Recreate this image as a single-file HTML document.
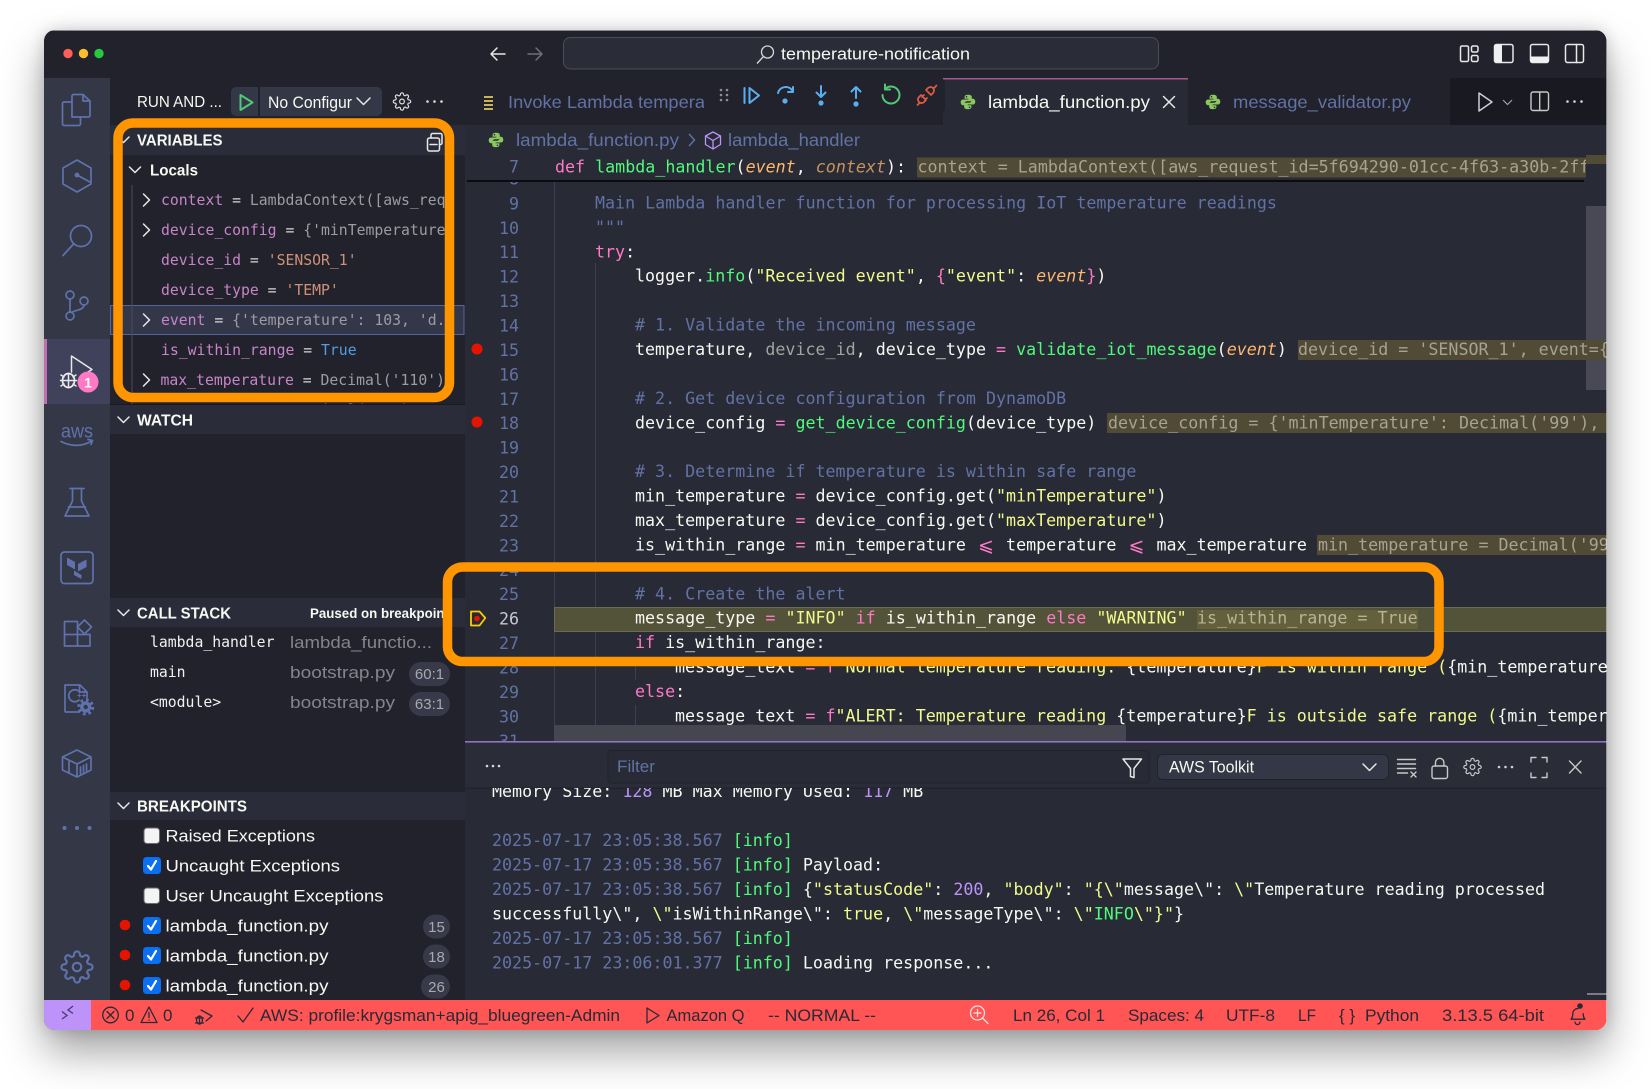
<!DOCTYPE html>
<html><head><meta charset="utf-8"><title>temperature-notification</title>
<style>
html,body{margin:0;padding:0;background:#fff;width:1651px;height:1089px;overflow:hidden}
#sh{position:absolute;left:44px;top:30px;width:1562.5px;height:1000px;border-radius:11px;box-shadow:0 22px 42px rgba(0,0,0,.36),0 0 16px rgba(0,0,0,.16)}
svg{position:absolute;left:0;top:0;filter:blur(.35px)}
text{white-space:pre}
.m{font-family:"DejaVu Sans Mono","Liberation Mono",monospace;font-size:16.66px;fill:#f8f8f2;transform:translateY(.9px)}
.n{font-family:"DejaVu Sans Mono","Liberation Mono",monospace;font-size:16.66px;fill:#6272a4;text-anchor:end;transform:translateY(.9px)}
.v{font-family:"DejaVu Sans Mono","Liberation Mono",monospace;font-size:14.78px;fill:#9c9ca2}
.s{font-family:"Liberation Sans",sans-serif;font-size:17px;fill:#f8f8f2}
.b{font-family:"Liberation Sans",sans-serif;font-size:15.5px;font-weight:bold;fill:#f8f8f2}
.st{font-family:"Liberation Sans",sans-serif;font-size:17px;fill:#282a36}
.c{fill:#6272a4}.k{fill:#ff79c6}.f{fill:#50fa7b}.y{fill:#f1fa8c}.o{fill:#ffb86c;font-style:italic}.od{fill:#c7935e;font-style:italic}.g{fill:#a3a39f}.p{fill:#bd93f9}
.in{fill:#a5a393}
.vk{fill:#c884c8}.vs{fill:#ce9178}.vb{fill:#4f9fe3}.ve{fill:#d8d8d8}
.ic{fill:none;stroke:#5f72ad;stroke-width:1.7;stroke-linecap:round;stroke-linejoin:round}
.w{fill:none;stroke:#e8e8e8;stroke-width:1.5;stroke-linecap:round;stroke-linejoin:round}
.d{fill:none;stroke:#282a36;stroke-width:1.3;stroke-linecap:round;stroke-linejoin:round}
.cb{fill:none;stroke:#5aaef0;stroke-width:2;stroke-linecap:round;stroke-linejoin:round}
</style></head><body>
<div id="sh"></div>
<svg width="1651" height="1089" viewBox="0 0 1651 1089" xmlns="http://www.w3.org/2000/svg">
<defs>
<clipPath id="win"><rect x="44" y="30" width="1562.5" height="1000" rx="11"/></clipPath>
<clipPath id="varclip"><rect x="110" y="155" width="346" height="249"/></clipPath>
<clipPath id="ed"><rect x="465" y="125" width="1142" height="616"/></clipPath>
<clipPath id="pn"><rect x="465" y="788" width="1142" height="212"/></clipPath>
<clipPath id="tab1"><rect x="465" y="78" width="240" height="47"/></clipPath>
<clipPath id="side"><rect x="110" y="598" width="333" height="30"/></clipPath>
<symbol id="gear" viewBox="0 0 24 24"><circle cx="12" cy="12" r="3" fill="none" stroke="currentColor" stroke-width="1.5"/><path fill="none" stroke="currentColor" stroke-width="1.5" d="M19.4 15a1.65 1.65 0 0 0 .33 1.82l.06.06a2 2 0 0 1 0 2.83 2 2 0 0 1-2.83 0l-.06-.06a1.65 1.65 0 0 0-1.82-.33 1.65 1.65 0 0 0-1 1.51V21a2 2 0 0 1-2 2 2 2 0 0 1-2-2v-.09A1.65 1.65 0 0 0 9 19.4a1.65 1.65 0 0 0-1.82.33l-.06.06a2 2 0 0 1-2.83 0 2 2 0 0 1 0-2.83l.06-.06a1.65 1.65 0 0 0 .33-1.82 1.65 1.65 0 0 0-1.51-1H3a2 2 0 0 1-2-2 2 2 0 0 1 2-2h.09A1.65 1.65 0 0 0 4.6 9a1.65 1.65 0 0 0-.33-1.82l-.06-.06a2 2 0 0 1 0-2.83 2 2 0 0 1 2.83 0l.06.06a1.65 1.65 0 0 0 1.82.33H9a1.65 1.65 0 0 0 1-1.51V3a2 2 0 0 1 2-2 2 2 0 0 1 2 2v.09a1.65 1.65 0 0 0 1 1.51 1.65 1.65 0 0 0 1.82-.33l.06-.06a2 2 0 0 1 2.83 0 2 2 0 0 1 0 2.83l-.06.06a1.65 1.65 0 0 0-.33 1.82V9a1.65 1.65 0 0 0 1.51 1H21a2 2 0 0 1 2 2 2 2 0 0 1-2 2h-.09a1.65 1.65 0 0 0-1.51 1z"/></symbol>
<symbol id="py" viewBox="0 0 16 16"><path fill="#8cc860" d="M8 .8C5.600.8 4.600 1.600 4.600 3v1.700h3.800v.8H3.200C1.700 5.500.7 6.600.7 8.300s1 3 2.500 3h1.500V9.500c0-1.300 1-2.300 2.300-2.300h3c1 0 1.800-.8 1.800-1.900V3C11.800 1.700 10.600.8 8 .8z"/><path fill="#8cc860" d="M8 15.200c2.400 0 3.400-.8 3.400-2.200v-1.700H7.600v-.8h5.200c1.500 0 2.500-1.100 2.500-2.800s-1-3-2.500-3h-1.500v1.800c0 1.300-1 2.300-2.300 2.300h-3c-1 0-1.800.8-1.800 1.900V13c0 1.300 1.200 2.200 3.800 2.200z"/><circle cx="6.500" cy="2.700" r=".8" fill="#2a2c3a"/><circle cx="9.500" cy="13.300" r=".8" fill="#2a2c3a"/></symbol>
</defs>
<g clip-path="url(#win)">
<rect x="44" y="30" width="1563" height="1000" fill="#21222c"/>
<rect x="44" y="30" width="1563" height="1" fill="#8a8a8e"/>

<!-- title bar -->
<circle cx="68" cy="53.500" r="4.700" fill="#ff5f57"/><circle cx="83.500" cy="53.500" r="4.700" fill="#febc2e"/><circle cx="99" cy="53.500" r="4.700" fill="#28c840"/>
<path class="w" d="M505 54H491M497 48l-6 6 6 6"/>
<path fill="none" stroke="#6d7080" stroke-width="1.500" stroke-linecap="round" stroke-linejoin="round" d="M528 54H542M536 48l6 6-6 6"/>
<rect x="563.500" y="37.500" width="595" height="31.500" rx="7" fill="#2a2c38" stroke="#4a4c5a"/>
<circle cx="767.500" cy="52" r="6" fill="none" stroke="#d8d8d8" stroke-width="1.300"/><path d="M763 57l-6 6.500" stroke="#d8d8d8" stroke-width="1.300" fill="none"/>
<text class="s" x="781" y="59.500" textLength="189" lengthAdjust="spacingAndGlyphs">temperature-notification</text>
<g class="w"><rect x="1460.500" y="46" width="8" height="15.500" rx="1.500"/><rect x="1471.500" y="46" width="6.500" height="6" rx="1.500"/><rect x="1471.500" y="55.500" width="6.500" height="6" rx="1.500"/>
<rect x="1494.500" y="44.500" width="18.500" height="18" rx="2"/><rect x="1530.500" y="44.500" width="18" height="18" rx="2"/><rect x="1565.500" y="44.500" width="18" height="18" rx="2"/><path d="M1576.500 44.500v18"/></g>
<path d="M1496.500 44.500h5.500v18h-5.500a2 2 0 0 1-2-2v-14a2 2 0 0 1 2-2z" fill="#f0f0f0"/>
<path d="M1530.500 56.500h18v4a2 2 0 0 1-2 2h-14a2 2 0 0 1-2-2z" fill="#f0f0f0"/>

<!-- activity bar -->
<rect x="44" y="78" width="66" height="922" fill="#343746"/>
<rect x="44" y="339" width="66" height="65" fill="#3f425a"/><rect x="44" y="339" width="3" height="65" fill="#c06fb0"/>
<g class="ic">
<path d="M72 117V96a1.500 1.500 0 0 1 1.500-1.500H83L90 101V115.500a1.500 1.500 0 0 1-1.500 1.500ZM83 94.500V101H90"/>
<path d="M72 102H64a1.500 1.500 0 0 0-1.500 1.500V124a1.500 1.500 0 0 0 1.500 1.500H79a1.500 1.500 0 0 0 1.500-1.500V117"/>
<path d="M77 160l14 8v16l-14 8-14-8v-16zM77 175l13 7"/>
<circle cx="81" cy="236" r="10.500"/><path d="M73.500 244L63 255.500"/>
<circle cx="70" cy="295" r="4"/><circle cx="70" cy="316" r="4"/><circle cx="84" cy="301" r="4"/><path d="M70 299v13M84 305c0 5-9 5-13 7.500"/>
<path d="M65 516l7.500-15V488.500h9V501l7.500 15zM70 488.500h14M68.500 507h17"/>
<rect x="61" y="552" width="32" height="31.500" rx="3.500"/>
<path d="M64.500 634.500h13v-13h-13zM64.500 634.500v11.500h13v-11.500M77.500 634.500H90v11.500H77.500"/><path d="M84.500 620l7 7-7 7-7-7z"/>
<path d="M79 712H66a1 1 0 0 1-1-1V685h15l7 7v6M79.500 685v7h7.500"/><path d="M79 691.500a6 6 0 1 0 0 8.500"/>
<path d="M62.500 757L77 750L91 757V770L77 777L62.500 770ZM62.500 757L77 764L91 757M77 764V777M69 761.500v11.500M80.500 767v6.500M83.500 765.500v6.500M86.500 764v6.500"/>
</g>
<circle cx="77" cy="175" r="2.400" fill="#5f72ad"/>
<circle cx="85.700" cy="707" r="7" fill="none" stroke="#5f72ad" stroke-width="3" stroke-dasharray="2.700 2.800"/>
<circle cx="85.700" cy="707" r="5.600" fill="#5f72ad"/><circle cx="85.700" cy="707" r="2.200" fill="#343746"/>
<text x="77" y="698" font-family="Liberation Sans,sans-serif" font-size="8" font-weight="bold" fill="#5f72ad">++</text>
<path fill="#5f72ad" d="M67 557.500L75 562V569.500L67 565ZM86.500 559.500L78 564V571.500L86.500 567ZM74 570.500L81.500 575V579L74 575Z"/>
<text x="61" y="437.500" font-family="Liberation Sans,sans-serif" font-size="19" fill="#5f72ad" textLength="32" lengthAdjust="spacingAndGlyphs">aws</text>
<path class="ic" d="M61 441.500q16 8 31-.5M88 439.500l4.500 1-1.500 4"/>
<g fill="#5f72ad"><circle cx="64.500" cy="828" r="2"/><circle cx="77" cy="828" r="2"/><circle cx="89.500" cy="828" r="2"/></g>
<use href="#gear" x="60" y="950" width="34" height="34" color="#5f72ad"/>
<!-- debug icon -->
<path class="w" stroke-width="1.800" d="M71.500 372v-16l20.500 13.500-7 4.500"/>
<ellipse cx="68.500" cy="380.500" rx="6" ry="7" fill="#3f425a" stroke="#f0f0f0" stroke-width="1.700"/><path class="w" d="M62.500 380.500h12M61 375l3 2M76 375l-3 2M60.500 380.500h3M73.500 380.500h3M61 386l3-2M76 386l-3-2M68.500 374v13"/>
<circle cx="88" cy="382" r="10.500" fill="#ff79c6"/><text x="88" y="387.500" font-family="Liberation Sans,sans-serif" font-size="14" font-weight="bold" fill="#f8f8f2" text-anchor="middle">1</text>

<!-- sidebar -->
<rect x="110" y="78" width="355" height="922" fill="#21222c"/>
<text class="s" x="137" y="107" textLength="85" lengthAdjust="spacingAndGlyphs" style="font-size:16px">RUN AND ...</text>
<rect x="231" y="87" width="151" height="29" rx="5" fill="#343746"/><rect x="258" y="87" width="2" height="29" fill="#21222c"/>
<path d="M240.500 95v15l12-7.500z" fill="none" stroke="#50c878" stroke-width="2" stroke-linejoin="round"/>
<text class="s" x="268" y="108" textLength="84" lengthAdjust="spacingAndGlyphs">No Configur</text>
<path class="w" d="M357 98l6.500 6.500 6.500-6.500"/>
<use href="#gear" x="392.500" y="92" width="19" height="19" color="#e0e0e0"/>
<g fill="#e0e0e0"><circle cx="427.500" cy="101.500" r="1.300"/><circle cx="434.500" cy="101.500" r="1.300"/><circle cx="441.500" cy="101.500" r="1.300"/></g>

<rect x="110" y="125" width="355" height="30" fill="#2a2c3a"/>
<rect x="110" y="405" width="355" height="29" fill="#2a2c3a"/>
<rect x="110" y="598" width="355" height="29" fill="#2a2c3a"/>
<rect x="110" y="792" width="355" height="28" fill="#2a2c3a"/>
<rect x="110" y="404" width="355" height="1" fill="#191a21"/>
<path class="w" stroke-width="1.300" d="M118 137l5.500 5.500 5.500-5.500M118 417l5.500 5.500 5.500-5.500M118 610l5.500 5.500 5.500-5.500M118 803l5.500 5.500 5.500-5.500M129.500 167l5.500 5.500 5.500-5.500"/>
<text class="b" x="137" y="145.500" textLength="85.500" lengthAdjust="spacingAndGlyphs">VARIABLES</text>
<g class="w" stroke-width="1.300"><rect x="427.500" y="138" width="12" height="13" rx="2"/><path d="M431 138v-3a1.500 1.500 0 0 1 1.500-1.500h8a1.500 1.500 0 0 1 1.500 1.500v8a1.500 1.500 0 0 1-1.500 1.500h-1M430 144.500h7"/></g>
<text class="b" x="150" y="175.500" textLength="48" lengthAdjust="spacingAndGlyphs">Locals</text>

<rect x="110.500" y="305.500" width="353.500" height="29" fill="#34374a" stroke="#55659a"/>
<rect x="131.500" y="185" width="1" height="219" fill="#4a4c58"/>
<path class="w" stroke="#d0d0d0" stroke-width="1.300" d="M143.500 194l6 6-6 6M143.500 224l6 6-6 6M143.500 314l6 6-6 6M143.500 374l6 6-6 6"/>
<g clip-path="url(#varclip)" class="v">
<text class="v" x="161" y="205"><tspan class="vk">context</tspan><tspan class="ve"> = </tspan>LambdaContext([aws_req.</text>
<text class="v" x="161" y="235"><tspan class="vk">device_config</tspan><tspan class="ve"> = </tspan>{'minTemperature'.</text>
<text class="v" x="161" y="265"><tspan class="vk">device_id</tspan><tspan class="ve"> = </tspan><tspan class="vs">'SENSOR_1'</tspan></text>
<text class="v" x="161" y="295"><tspan class="vk">device_type</tspan><tspan class="ve"> = </tspan><tspan class="vs">'TEMP'</tspan></text>
<text class="v" x="161" y="325"><tspan class="vk">event</tspan><tspan class="ve"> = </tspan>{'temperature': 103, 'd..</text>
<text class="v" x="161" y="355"><tspan class="vk">is_within_range</tspan><tspan class="ve"> = </tspan><tspan class="vb">True</tspan></text>
<text class="v" x="160.500" y="385"><tspan class="vk">max_temperature</tspan><tspan class="ve"> = </tspan>Decimal('110')</text>
<text class="v" x="161" y="415"><tspan class="vk">message_type</tspan><tspan class="ve"> = </tspan>Decimal('99')</text>
</g>
<text class="b" x="137" y="425.500" textLength="56" lengthAdjust="spacingAndGlyphs">WATCH</text>
<text class="b" x="137" y="618.500" textLength="94" lengthAdjust="spacingAndGlyphs">CALL STACK</text>
<g clip-path="url(#side)"><text class="b" x="310" y="618" textLength="139" lengthAdjust="spacingAndGlyphs" style="font-size:13.5px">Paused on breakpoint</text></g>
<text class="v" x="150" y="647" style="fill:#f0f0f0">lambda_handler</text>
<text class="v" x="150" y="677" style="fill:#f0f0f0">main</text>
<text class="v" x="150" y="707" style="fill:#f0f0f0">&lt;module&gt;</text>
<g class="s"><text class="s" x="290" y="648" textLength="142" lengthAdjust="spacingAndGlyphs" style="fill:#84858c">lambda_functio...</text>
<text class="s" x="290" y="678" textLength="105" lengthAdjust="spacingAndGlyphs" style="fill:#84858c">bootstrap.py</text>
<text class="s" x="290" y="708" textLength="105" lengthAdjust="spacingAndGlyphs" style="fill:#84858c">bootstrap.py</text></g>
<rect x="409" y="662" width="41" height="24" rx="12" fill="#383a49"/><rect x="409" y="692" width="41" height="24" rx="12" fill="#383a49"/>
<text class="s" x="429.500" y="679" text-anchor="middle" style="fill:#a8a8ae;font-size:15px">60:1</text>
<text class="s" x="429.500" y="709" text-anchor="middle" style="fill:#a8a8ae;font-size:15px">63:1</text>

<text class="b" x="137" y="811.500" textLength="110" lengthAdjust="spacingAndGlyphs">BREAKPOINTS</text>
<rect x="144" y="828" width="15.500" height="15.500" rx="3" fill="#f4f4f4" stroke="#6a6a70"/>
<rect x="144" y="888" width="15.500" height="15.500" rx="3" fill="#f4f4f4" stroke="#6a6a70"/>
<g fill="#0a6ff0"><rect x="143" y="857" width="18" height="17" rx="3.500"/><rect x="143" y="917" width="18" height="17" rx="3.500"/><rect x="143" y="947" width="18" height="17" rx="3.500"/><rect x="143" y="977" width="18" height="17" rx="3.500"/></g>
<g fill="none" stroke="#fff" stroke-width="2.200" stroke-linecap="round" stroke-linejoin="round"><path d="M148 866l3 3.500 5-8.500M148 926l3 3.500 5-8.500M148 956l3 3.500 5-8.500M148 986l3 3.500 5-8.500"/></g>
<g fill="#e51400"><circle cx="125" cy="925" r="5.300"/><circle cx="125" cy="955" r="5.300"/><circle cx="125" cy="985" r="5.300"/></g>
<text class="s" x="165.500" y="841.500" textLength="149.500" lengthAdjust="spacingAndGlyphs">Raised Exceptions</text>
<text class="s" x="165.500" y="871.500" textLength="174.500" lengthAdjust="spacingAndGlyphs">Uncaught Exceptions</text>
<text class="s" x="165.500" y="901.500" textLength="218" lengthAdjust="spacingAndGlyphs">User Uncaught Exceptions</text>
<text class="s" x="165.500" y="931.500" textLength="163" lengthAdjust="spacingAndGlyphs">lambda_function.py</text>
<text class="s" x="165.500" y="961.500" textLength="163" lengthAdjust="spacingAndGlyphs">lambda_function.py</text>
<text class="s" x="165.500" y="991.500" textLength="163" lengthAdjust="spacingAndGlyphs">lambda_function.py</text>
<g fill="#383a49"><rect x="423" y="914.500" width="27" height="24" rx="12"/><rect x="423" y="944.500" width="27" height="24" rx="12"/><rect x="421" y="974.500" width="29" height="24" rx="12"/></g>
<g class="s"><text class="s" x="436.500" y="932" text-anchor="middle" style="fill:#a8a8ae;font-size:15px">15</text><text class="s" x="436.500" y="962" text-anchor="middle" style="fill:#a8a8ae;font-size:15px">18</text><text class="s" x="436.500" y="992" text-anchor="middle" style="fill:#a8a8ae;font-size:15px">26</text></g>

<!-- editor -->
<rect x="465" y="125" width="1142" height="616" fill="#282a36"/>
<!-- tabs -->
<rect x="465" y="78" width="478" height="47" fill="#21222c"/>
<rect x="1188" y="78" width="262" height="47" fill="#21222c"/>
<rect x="1450" y="78" width="157" height="47" fill="#191a21"/>
<rect x="943" y="78" width="245" height="47" fill="#282a36"/><rect x="943" y="78" width="245" height="1.500" fill="#a8578f"/>
<g fill="#c9b458"><rect x="484" y="96" width="9" height="2"/><rect x="484" y="100" width="9" height="2"/><rect x="484" y="104" width="9" height="2"/><rect x="484" y="108" width="9" height="2"/></g>
<g clip-path="url(#tab1)"><text class="s" x="508" y="108" textLength="197" lengthAdjust="spacingAndGlyphs" style="fill:#6272a4;font-size:17.5px">Invoke Lambda tempera</text></g>
<use href="#py" x="960" y="94" width="16" height="16"/>
<text class="s" x="988" y="108" textLength="162" lengthAdjust="spacingAndGlyphs" style="font-size:17.5px">lambda_function.py</text>
<path class="w" d="M1163.500 96.500l11 11M1174.500 96.500l-11 11"/>
<use href="#py" x="1205" y="94" width="16" height="16"/>
<text class="s" x="1233" y="108" textLength="178" lengthAdjust="spacingAndGlyphs" style="fill:#6272a4;font-size:17.5px">message_validator.py</text>
<path fill="none" stroke="#d0d0d0" stroke-width="1.500" stroke-linejoin="round" d="M1479 93v18l13-9z"/>
<path fill="none" stroke="#a0a0a0" stroke-width="1.200" d="M1503 100l4.500 4.500 4.500-4.500"/>
<rect x="1531" y="92" width="17.500" height="18.500" rx="2" fill="none" stroke="#c8c8c8" stroke-width="1.400"/><path stroke="#c8c8c8" stroke-width="1.400" d="M1539.700 92v18"/>
<g fill="#d8d8d8"><circle cx="1567.500" cy="101.500" r="1.300"/><circle cx="1574.500" cy="101.500" r="1.300"/><circle cx="1581.500" cy="101.500" r="1.300"/></g>
<!-- breadcrumbs -->
<use href="#py" x="488" y="132" width="16" height="16"/>
<text class="s" x="516" y="146" textLength="163" lengthAdjust="spacingAndGlyphs" style="fill:#6272a4;font-size:17.5px">lambda_function.py</text>
<path fill="none" stroke="#6272a4" stroke-width="1.400" d="M689 134l5.500 6-5.500 6"/>
<path fill="none" stroke="#bd93f9" stroke-width="1.300" stroke-linejoin="round" d="M713 132l7.500 4v8.500l-7.500 4.500-7.500-4.500V136zM705.500 136l7.500 4.500 7.500-4.500M713 140.500V149"/>
<text class="s" x="728" y="146" textLength="132" lengthAdjust="spacingAndGlyphs" style="fill:#6272a4;font-size:17.5px">lambda_handler</text>

<g clip-path="url(#ed)">
<!-- scrollbars (under text) -->
<rect x="1586" y="206" width="21" height="184" fill="#484954"/>
<!-- guides -->
<path stroke="#3d4054" stroke-width="1" d="M554.500 181V741M595.500 263V741M635.500 658V680M635.500 705V728"/>
<!-- current line -->
<rect x="554.500" y="607.500" width="1053" height="24" fill="#525339" stroke="#6a6c52"/>
<rect x="1197" y="610" width="221" height="19" fill="#65603c"/>
<!-- inline value backgrounds -->
<rect x="1298" y="340" width="309" height="20" fill="#514a35"/>
<rect x="1107" y="413" width="500" height="20" fill="#514a35"/>
<rect x="1317" y="535" width="290" height="20" fill="#514a35"/>
<g class="n">
<text class="n" x="519" y="182.500">8</text>
<text class="n" x="519" y="207.500">9</text><text class="n" x="519" y="232">10</text><text class="n" x="519" y="256.400">11</text><text class="n" x="519" y="280.800">12</text><text class="n" x="519" y="305.200">13</text><text class="n" x="519" y="329.700">14</text><text class="n" x="519" y="354.100">15</text><text class="n" x="519" y="378.500">16</text><text class="n" x="519" y="403">17</text><text class="n" x="519" y="427.400">18</text><text class="n" x="519" y="451.800">19</text><text class="n" x="519" y="476.200">20</text><text class="n" x="519" y="500.700">21</text><text class="n" x="519" y="525.100">22</text><text class="n" x="519" y="549.500">23</text><text class="n" x="519" y="574">24</text><text class="n" x="519" y="598.400">25</text><text class="n" x="519" y="622.800" style="fill:#c6c8d4">26</text><text class="n" x="519" y="647.200">27</text><text class="n" x="519" y="671.700">28</text><text class="n" x="519" y="696.100">29</text><text class="n" x="519" y="720.500">30</text><text class="n" x="519" y="745">31</text>
</g>
<text class="m" x="595" y="207.500"><tspan class="c">Main Lambda handler function for processing IoT temperature readings</tspan></text>
<text class="m" x="595" y="232"><tspan class="c">"""</tspan></text>
<text class="m" x="595" y="256.400"><tspan class="k">try</tspan>:</text>
<text class="m" x="635" y="280.800">logger.<tspan class="f">info</tspan>(<tspan class="y">"Received event"</tspan>, <tspan class="k">{</tspan><tspan class="y">"event"</tspan>: <tspan class="o">event</tspan><tspan class="k">}</tspan>)</text>
<text class="m" x="635" y="329.700"><tspan class="c"># 1. Validate the incoming message</tspan></text>
<text class="m" x="635" y="354.100">temperature, <tspan class="g">device_id</tspan>, device_type <tspan class="k">=</tspan> <tspan class="f">validate_iot_message</tspan>(<tspan class="o">event</tspan>)</text>
<text class="m in" x="1298" y="354.100">device_id = 'SENSOR_1', event={'temperature': 103}</text>
<text class="m" x="635" y="403"><tspan class="c"># 2. Get device configuration from DynamoDB</tspan></text>
<text class="m" x="635" y="427.400">device_config <tspan class="k">=</tspan> <tspan class="f">get_device_config</tspan>(device_type)</text>
<text class="m in" x="1108" y="427.400">device_config = {'minTemperature': Decimal('99'), 'max</text>
<text class="m" x="635" y="476.200"><tspan class="c"># 3. Determine if temperature is within safe range</tspan></text>
<text class="m" x="635" y="500.700">min_temperature <tspan class="k">=</tspan> device_config.get(<tspan class="y">"minTemperature"</tspan>)</text>
<text class="m" x="635" y="525.100">max_temperature <tspan class="k">=</tspan> device_config.get(<tspan class="y">"maxTemperature"</tspan>)</text>
<text class="m" x="635" y="549.500">is_within_range <tspan class="k">=</tspan> min_temperature    temperature    max_temperature</text>
<text x="986" y="551.400" text-anchor="middle" font-family="DejaVu Sans,sans-serif" font-size="19" fill="#ff79c6">⩽</text>
<text x="1136.500" y="551.400" text-anchor="middle" font-family="DejaVu Sans,sans-serif" font-size="19" fill="#ff79c6">⩽</text>
<text class="m in" x="1318" y="549.500">min_temperature = Decimal('99')</text>
<text class="m" x="635" y="598.400"><tspan class="c"># 4. Create the alert</tspan></text>
<text class="m" x="635" y="622.800">message_type <tspan class="k">=</tspan> <tspan class="y">"INFO"</tspan> <tspan class="k">if</tspan> is_within_range <tspan class="k">else</tspan> <tspan class="y">"WARNING"</tspan></text>
<text class="m" x="1197" y="622.800" style="fill:#b6b498">is_within_range = True</text>
<text class="m" x="635" y="647.200"><tspan class="k">if</tspan> is_within_range:</text>
<text class="m" x="675" y="671.700">message_text <tspan class="k">=</tspan> <tspan class="k">f</tspan><tspan class="y">"Normal temperature reading: </tspan>{temperature}<tspan class="y">F is within range (</tspan>{min_temperature</text>
<text class="m" x="635" y="696.100"><tspan class="k">else</tspan>:</text>
<text class="m" x="675" y="720.500">message_text <tspan class="k">=</tspan> <tspan class="k">f</tspan><tspan class="y">"ALERT: Temperature reading </tspan>{temperature}<tspan class="y">F is outside safe range (</tspan>{min_temper</text>
<!-- gutter breakpoints -->
<circle cx="477" cy="349" r="5.500" fill="#e51400"/><circle cx="477" cy="422" r="5.500" fill="#e51400"/>
<path d="M471 611.500h8.500l5.800 6.500-5.800 7.500H471z" fill="none" stroke="#ffcc00" stroke-width="1.800" stroke-linejoin="round"/><circle cx="477" cy="618.500" r="2.800" fill="#e51400"/>
<rect x="554" y="725" width="572" height="16" fill="#45464f"/>
<!-- sticky -->
<rect x="465" y="155" width="1142" height="25" fill="#282a36"/>
<rect x="467" y="180" width="1117" height="2" fill="#0b0b10"/>
<text class="n" x="519" y="171.500">7</text>
<rect x="917" y="157.500" width="669" height="20" fill="#514a35"/>
<rect x="1586" y="155" width="21" height="9" fill="#514a35"/>
<text class="m" x="555" y="171.500"><tspan class="k">def</tspan> <tspan class="f">lambda_handler</tspan>(<tspan class="o">event</tspan>, <tspan class="od">context</tspan>):</text>
<clipPath id="stk"><rect x="917" y="150" width="669" height="30"/></clipPath>
<g clip-path="url(#stk)"><text class="m in" x="917.500" y="171.500">context = LambdaContext([aws_request_id=5f694290-01cc-4f63-a30b-2ff</text></g>
</g>

<!-- debug toolbar -->
<rect x="704" y="78" width="241" height="35" rx="5" fill="#21222c"/>
<g fill="#8a8c98"><circle cx="721" cy="90" r="1.300"/><circle cx="727" cy="90" r="1.300"/><circle cx="721" cy="95" r="1.300"/><circle cx="727" cy="95" r="1.300"/><circle cx="721" cy="100" r="1.300"/><circle cx="727" cy="100" r="1.300"/></g>
<g class="cb">
<path d="M744.500 88v15M749.500 88v15l9.500-7.500z"/>
<path d="M778 93a8 8 0 0 1 14-3M793 87v5h-5"/>
<path d="M821 86v11M816.500 92.500l4.500 4.500 4.500-4.500"/>
<path d="M856 98V87M851.500 91.500l4.500-4.500 4.500 4.500"/>
</g>
<g fill="#5aaef0"><circle cx="785" cy="101" r="2.600"/><circle cx="821" cy="103" r="2.600"/><circle cx="856" cy="104" r="2.600"/></g>
<path d="M885 89a8.500 8.500 0 1 1-2.500 6M885 84.500v5h5" fill="none" stroke="#50c878" stroke-width="2" stroke-linecap="round" stroke-linejoin="round"/>
<path d="M920 102.500l-2.500 2.500M934 88l2.500-2.500M921 95l-2 2a3.500 3.500 0 0 0 5 5l2-2zM928 88l-2 2 5 5 2-2a3.500 3.500 0 0 0-5-5zM922 97l2-2M925 100l2-2" fill="none" stroke="#df5d44" stroke-width="1.700" stroke-linecap="round" stroke-linejoin="round"/>

<!-- panel -->
<rect x="465" y="741" width="1142" height="259" fill="#282a36"/>
<rect x="465" y="741" width="1142" height="1.600" fill="#8f73c4"/>
<rect x="465" y="743" width="1142" height="44.500" fill="#2a2c38"/>
<rect x="465" y="787.500" width="1142" height="1.500" fill="#21222c"/>
<g fill="#d8d8d8"><circle cx="487" cy="766" r="1.300"/><circle cx="493" cy="766" r="1.300"/><circle cx="499" cy="766" r="1.300"/></g>
<rect x="608" y="750.500" width="541" height="32.500" rx="3" fill="#282a36" stroke="#21222c"/>
<text class="s" x="617" y="772" textLength="38" lengthAdjust="spacingAndGlyphs" style="fill:#6272a4;font-size:16.500px">Filter</text>
<path class="w" stroke="#c8c8c8" stroke-width="1.300" d="M1123 759h18.500l-7.500 9.500v9l-3.500-1v-8z"/>
<rect x="1157.500" y="754.500" width="231" height="25" rx="5" fill="#343746" stroke="#21222c"/>
<text class="s" x="1169" y="772.500" textLength="85" lengthAdjust="spacingAndGlyphs">AWS Toolkit</text>
<path class="w" d="M1363 764l6.500 6.500 6.500-6.500"/>
<g fill="none" stroke="#c8c8c8" stroke-width="1.400" stroke-linecap="round" stroke-linejoin="round">
<path d="M1397.500 759.500h18M1397.500 764h18M1397.500 768.500h18M1397.500 773h10M1411 772l5 5M1416 772l-5 5"/>
<rect x="1432" y="766" width="15.500" height="12.500" rx="2"/><path d="M1435.500 766v-3.500a4.200 4.200 0 0 1 8.400 0V766"/>
<path d="M1531 762v-4.500h5M1542 757.500h5v4.500M1531 773v4.500h5M1542 777.500h5V773"/>
<path d="M1569.500 761l11.500 12M1581 761l-11.500 12"/>
</g>
<use href="#gear" x="1463" y="757.500" width="19" height="19" color="#c8c8c8"/>
<g fill="#d0d0d0"><circle cx="1499" cy="767" r="1.300"/><circle cx="1505.500" cy="767" r="1.300"/><circle cx="1512" cy="767" r="1.300"/></g>
<g clip-path="url(#pn)">
<text class="m" x="492" y="796">Memory Size: <tspan class="p">128</tspan> MB Max Memory Used: <tspan class="p">117</tspan> MB</text>
<text class="m" x="492" y="845"><tspan class="c">2025-07-17 23:05:38.567</tspan> <tspan class="f">[info]</tspan></text>
<text class="m" x="492" y="869.500"><tspan class="c">2025-07-17 23:05:38.567</tspan> <tspan class="f">[info]</tspan> Payload:</text>
<text class="m" x="492" y="894"><tspan class="c">2025-07-17 23:05:38.567</tspan> <tspan class="f">[info]</tspan> {<tspan class="y">"statusCode"</tspan>: <tspan class="p">200</tspan>, <tspan class="y">"body"</tspan>: <tspan class="y">"{\"</tspan>message\": <tspan class="y">\"</tspan>Temperature reading processed</text>
<text class="m" x="492" y="918.500">successfully\", <tspan class="y">\"</tspan>isWithinRange\": <tspan class="y">true</tspan>, <tspan class="y">\"</tspan>messageType\": <tspan class="y">\"</tspan><tspan class="f">INFO</tspan><tspan class="y">\"}"</tspan>}</text>
<text class="m" x="492" y="943"><tspan class="c">2025-07-17 23:05:38.567</tspan> <tspan class="f">[info]</tspan></text>
<text class="m" x="492" y="967.500"><tspan class="c">2025-07-17 23:06:01.377</tspan> <tspan class="f">[info]</tspan> Loading response...</text>
</g>
<rect x="1587" y="993" width="20" height="2" fill="#7a7b85"/>

<!-- status bar -->
<rect x="44" y="1000" width="1563" height="30" fill="#ff5555"/>
<rect x="44" y="1000" width="47" height="30" fill="#bd93f9"/>
<path d="M62 1019l5-3.500-5-4M73 1006l-5 4 5 3.500" fill="none" stroke="#4a3a70" stroke-width="1.300"/>
<g class="d">
<circle cx="110.500" cy="1015" r="7.800"/><path d="M107 1011.500l7 7M114 1011.500l-7 7"/>
<path d="M149 1007l8 15.500h-16zM149 1012.500v5M149 1020v.2"/>
<path d="M201 1010l11 6-6 5"/><ellipse cx="199.500" cy="1020" rx="3" ry="4"/><path d="M195.500 1018h8M195.500 1023h8M199.500 1016v8"/>
<path d="M238 1016l5 6 10-14"/>
<path d="M647 1008v15l12-7.500z"/>
<path d="M1578 1008.500a5.200 5.200 0 0 0-5.200 5.200c0 4-1.800 5.500-1.800 5.500h14s-1.800-1.500-1.800-5.500M1575 1022a2.500 2.500 0 0 0 5 0"/>
</g>
<g fill="none" stroke="#f8e0e0" stroke-width="1.300" stroke-linecap="round"><circle cx="977.500" cy="1013" r="7"/><path d="M982.500 1018l5.500 5.500M977.500 1009.500v7M974 1013h7"/></g>
<circle cx="1580" cy="1006" r="2.800" fill="#282a36"/>
<text class="st" x="125" y="1021">0</text><text class="st" x="163" y="1021">0</text>
<text class="st" x="260" y="1021" textLength="360" lengthAdjust="spacingAndGlyphs">AWS: profile:krygsman+apig_bluegreen-Admin</text>
<text class="st" x="666.500" y="1021" textLength="78" lengthAdjust="spacingAndGlyphs">Amazon Q</text>
<text class="st" x="768" y="1021" textLength="108" lengthAdjust="spacingAndGlyphs">-- NORMAL --</text>
<text class="st" x="1013" y="1021" textLength="92" lengthAdjust="spacingAndGlyphs">Ln 26, Col 1</text>
<text class="st" x="1128" y="1021" textLength="76" lengthAdjust="spacingAndGlyphs">Spaces: 4</text>
<text class="st" x="1226" y="1021" textLength="49" lengthAdjust="spacingAndGlyphs">UTF-8</text>
<text class="st" x="1298" y="1021" textLength="18" lengthAdjust="spacingAndGlyphs">LF</text>
<text class="st" x="1339" y="1021" textLength="16" lengthAdjust="spacing">{}</text>
<text class="st" x="1365" y="1021" textLength="54" lengthAdjust="spacingAndGlyphs">Python</text>
<text class="st" x="1442" y="1021" textLength="102" lengthAdjust="spacingAndGlyphs">3.13.5 64-bit</text>

<!-- orange annotations -->
<rect x="118" y="123" width="331.500" height="274.500" rx="15" fill="none" stroke="#ff9500" stroke-width="9.500"/>
<rect x="447.500" y="567" width="991.500" height="94.500" rx="15" fill="none" stroke="#ff9500" stroke-width="9.500"/>
</g>
</svg>
</body></html>
